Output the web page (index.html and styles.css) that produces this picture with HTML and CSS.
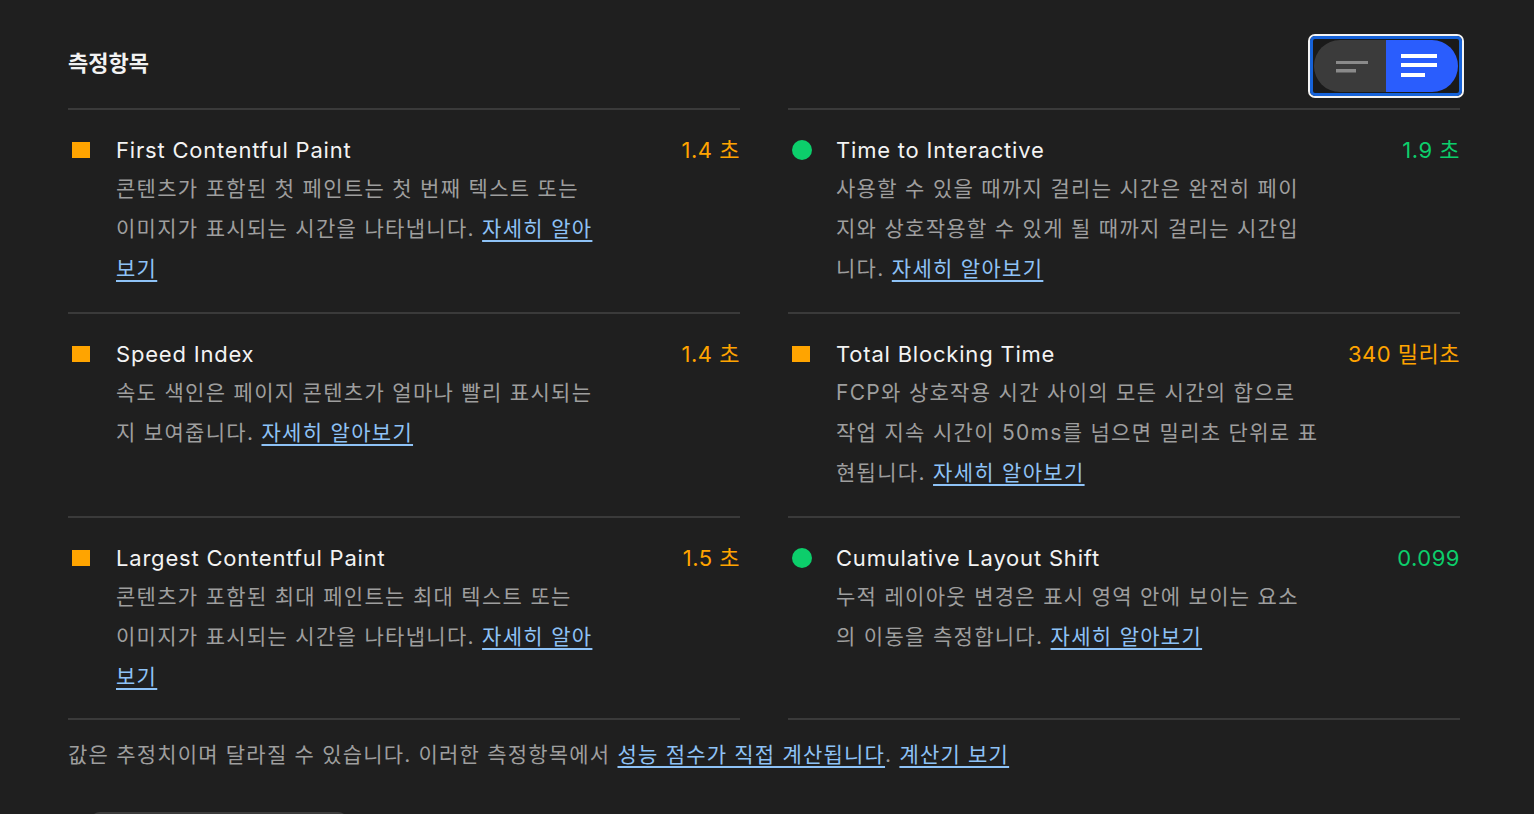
FILE: index.html
```html
<!DOCTYPE html>
<html lang="ko">
<head>
<meta charset="utf-8">
<link rel="stylesheet" href="styles.css">
</head>
<body>
<div class="page">
  <div class="header">
    <div class="title">측정항목</div>
    <div class="toggle-focus">
      <div class="toggle">
        <div class="half half-off">
          <svg width="32" height="12" viewBox="0 0 32 12"><rect x="0" y="0" width="32" height="3" fill="#8a8a8a"/><rect x="0" y="8" width="20" height="3.5" fill="#8a8a8a"/></svg>
        </div>
        <div class="half half-on">
          <svg width="36" height="24" viewBox="0 0 36 24"><rect x="0" y="0" width="36" height="4" fill="#fff"/><rect x="0" y="9" width="36" height="4" fill="#fff"/><rect x="0" y="19" width="24" height="4" fill="#fff"/></svg>
        </div>
      </div>
    </div>
  </div>

  <div class="grid">
    <div class="metric">
      <span class="icon square"></span>
      <span class="m-title">First Contentful Paint</span>
      <span class="m-value avg">1.4 초</span>
      <div class="m-desc">콘텐츠가 포함된 첫 페인트는 첫 번째 텍스트 또는<br>이미지가 표시되는 시간을 나타냅니다. <a href="#">자세히 알아<br>보기</a></div>
    </div>
    <div class="metric">
      <span class="icon circle"></span>
      <span class="m-title">Time to Interactive</span>
      <span class="m-value pass">1.9 초</span>
      <div class="m-desc">사용할 수 있을 때까지 걸리는 시간은 완전히 페이<br>지와 상호작용할 수 있게 될 때까지 걸리는 시간입<br>니다. <a href="#">자세히 알아보기</a></div>
    </div>
    <div class="metric">
      <span class="icon square"></span>
      <span class="m-title">Speed Index</span>
      <span class="m-value avg">1.4 초</span>
      <div class="m-desc">속도 색인은 페이지 콘텐츠가 얼마나 빨리 표시되는<br>지 보여줍니다. <a href="#">자세히 알아보기</a></div>
    </div>
    <div class="metric">
      <span class="icon square"></span>
      <span class="m-title">Total Blocking Time</span>
      <span class="m-value avg">340 밀리초</span>
      <div class="m-desc">FCP와 상호작용 시간 사이의 모든 시간의 합으로<br>작업 지속 시간이 50ms를 넘으면 밀리초 단위로 표<br>현됩니다. <a href="#">자세히 알아보기</a></div>
    </div>
    <div class="metric">
      <span class="icon square"></span>
      <span class="m-title">Largest Contentful Paint</span>
      <span class="m-value avg">1.5 초</span>
      <div class="m-desc">콘텐츠가 포함된 최대 페인트는 최대 텍스트 또는<br>이미지가 표시되는 시간을 나타냅니다. <a href="#">자세히 알아<br>보기</a></div>
    </div>
    <div class="metric">
      <span class="icon circle"></span>
      <span class="m-title">Cumulative Layout Shift</span>
      <span class="m-value pass">0.099</span>
      <div class="m-desc">누적 레이아웃 변경은 표시 영역 안에 보이는 요소<br>의 이동을 측정합니다. <a href="#">자세히 알아보기</a></div>
    </div>
  </div>

  <div class="footer">값은 추정치이며 달라질 수 있습니다. 이러한 측정항목에서 <a href="#">성능 점수가 직접 계산됩니다</a>. <a href="#">계산기 보기</a></div>
  <div class="stub"></div>
</div>
</body>
</html>
```

FILE: styles.css
```css
html, body {
  margin: 0;
  padding: 0;
  background: #1f1f1f;
  height: 100%;
  overflow: hidden;
}

.page {
  width: 1392px;
  padding: 34px 0 0 68px;
  font-family: Inter, "Noto Sans CJK KR", sans-serif;
  color: #f2f2f2;
}

.header {
  display: flex;
  justify-content: space-between;
  align-items: center;
  height: 64px;
  margin-bottom: 10px;
}

.title {
  font-family: "Noto Sans CJK KR", sans-serif;
  font-size: 22px;
  font-weight: 700;
  color: #f2f2f2;
  margin-top: -10px;
}

.toggle-focus {
  width: 152px;
  height: 60px;
  border: 2px solid #f4f4f4;
  border-radius: 7px;
  margin-right: -4px;
}

.toggle {
  box-sizing: border-box;
  width: 152px;
  height: 60px;
  border: 3px solid #1662d8;
  border-radius: 5px;
  background: #1a1a1a;
  padding: 1px;
  display: flex;
}

.half {
  flex: 1;
  display: flex;
  align-items: center;
  justify-content: center;
}

.half-off {
  background: #3b3b3b;
  border-radius: 26px 0 0 26px;
}

.half-off svg {
  margin-top: 2px;
  margin-left: 4px;
}

.half-on {
  background: #2a5dfd;
  border-radius: 0 26px 26px 0;
}

.half-on svg {
  margin-left: -6px;
}

.grid {
  display: grid;
  grid-template-columns: 672px 672px;
  column-gap: 48px;
}

.metric {
  display: grid;
  grid-template-columns: 48px 1fr auto;
  grid-template-rows: 36px auto;
  align-content: start;
  border-top: 2px solid #3a3a3a;
  padding: 22px 0 25px;
  height: 155px;
}

.metric:nth-child(5), .metric:nth-child(6) {
  border-bottom: 2px solid #3a3a3a;
  height: 153px;
}

.icon {
  align-self: center;
  justify-self: start;
}

.square {
  width: 18px;
  height: 16px;
  background: #ffa400;
  margin-left: 4px;
}

.circle {
  width: 20px;
  height: 20px;
  border-radius: 50%;
  background: #0cce6b;
  margin-left: 4px;
}

.m-title {
  font-size: 22px;
  line-height: 36px;
  letter-spacing: 0.8px;
  color: #f3f3f3;
}

.m-value {
  font-size: 22px;
  line-height: 36px;
  letter-spacing: 0.5px;
  text-align: right;
  white-space: nowrap;
}

.avg { color: #ffa400; }
.pass { color: #0cce6b; }

.m-desc {
  grid-column: 2 / 4;
  padding-top: 1px;
  font-size: 21px;
  letter-spacing: 1.3px;
  line-height: 40px;
  color: #9e9e9e;
  white-space: nowrap;
}

a {
  color: #8ec2f6;
  text-decoration: underline;
  text-underline-offset: 4px;
}

.footer {
  margin-top: 15px;
  font-size: 21px;
  letter-spacing: 1.2px;
  line-height: 40px;
  color: #9e9e9e;
}

.stub {
  margin: 37px 0 0 22px;
  width: 258px;
  height: 20px;
  background: #3c3c3c;
  border-radius: 10px;
}
```
